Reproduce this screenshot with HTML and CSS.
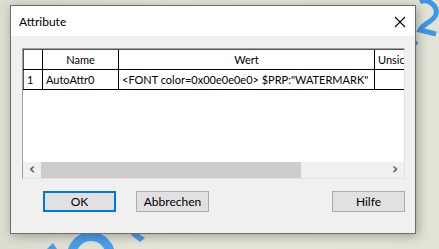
FILE: index.html
```html
<!DOCTYPE html>
<html lang="de">
<head>
<meta charset="UTF-8">
<title>Attribute</title>
<link rel="stylesheet" href="styles.css">
</head>
<body>

<svg class="backdrop" width="439" height="249" viewBox="0 0 439 249">
    <path d="M420 2 C428 -2 438 6 436 14 C434 22 424 22 420 30 L436 34" fill="none" stroke="#3f97e8" stroke-width="5"/>
    <circle cx="416" cy="43" r="2" fill="#3f97e8"/>
    <circle cx="91" cy="256" r="19.5" fill="none" stroke="#4a9ee9" stroke-width="9"/>
    <polygon points="47,249 53,243 57,249" fill="#4a9ee9"/>
    <polygon points="131,235 136,232 145,238 140,242" fill="#4a9ee9"/>
</svg>

<div class="dialog">
    <div class="titlebar">
        <span class="title">Attribute</span>
        <svg class="close" width="12" height="12" viewBox="0 0 12 12">
            <path d="M1 1 L11 11 M11 1 L1 11" stroke="#000" stroke-width="1.1"/>
        </svg>
    </div>

    <div class="content">
        <div class="grid">
            <div class="table">
                <div class="row header">
                    <div class="cell rowhead"></div>
                    <div class="cell name">Name</div>
                    <div class="cell wert">Wert</div>
                    <div class="cell hidden">Unsichtbar</div>
                </div>
                <div class="row">
                    <div class="cell rowhead">1</div>
                    <div class="cell name left">AutoAttr0</div>
                    <div class="cell wert left">&lt;FONT color=0x00e0e0e0&gt; $PRP:"WATERMARK"</div>
                    <div class="cell empty"></div>
                </div>
            </div>
            <div class="scrollbar">
                <div class="arrow">&#x2039;</div>
                <div class="thumb"></div>
                <div class="track"></div>
                <div class="arrow">&#x203A;</div>
            </div>
        </div>

        <div class="buttons">
            <button class="btn default">OK</button>
            <button class="btn">Abbrechen</button>
            <button class="btn help">Hilfe</button>
        </div>
    </div>
</div>

</body>
</html>
```

FILE: styles.css
```css
body {
    margin: 0;
    width: 439px;
    height: 249px;
    overflow: hidden;
    position: relative;
    background: linear-gradient(to right, #dddcd0, #e6e5da 40%, #e3e2d6);
    font-family: Lato, "Noto Sans", sans-serif;
    font-size: 12px;
    color: #000;
}
.backdrop {
    position: absolute;
    left: 0;
    top: 0;
}
.dialog {
    position: relative;
    margin: 5px 0 0 10px;
    width: 404px;
    height: 227px;
    border: 1px solid #6e6e6e;
    background-color: #f0f0f0;
    box-shadow: 2px 2px 10px rgba(0, 0, 0, 0.3);
    display: flex;
    flex-direction: column;
}
.titlebar {
    height: 30px;
    background-color: #fff;
    display: flex;
    align-items: center;
    justify-content: space-between;
    padding: 0 9px 0 8px;
}
.title {
    font-size: 12px;
}
.close {
    margin-top: 1px;
}
.content {
    padding: 12px 10px 0 11px;
}
.grid {
    height: 129px;
    border: 1px solid;
    border-color: #a0a0a0 #e3e3e3 #e3e3e3 #a0a0a0;
    background-color: #fff;
    display: flex;
    flex-direction: column;
    overflow: hidden;
}
.table {
    flex: 1;
    overflow: hidden;
    font-size: 11px;
}
.row {
    display: flex;
    height: 19px;
    border-bottom: 1px solid #000;
}
.header {
    border-top: 1px solid #555;
    background-color: #fff;
}
.cell {
    flex-shrink: 0;
    border-right: 1px solid #000;
    height: 19px;
    line-height: 19px;
    overflow: hidden;
    white-space: nowrap;
    padding: 0 3px;
    box-sizing: border-box;
}
.rowhead {
    width: 20px;
    border-left: 1px solid #555;
    padding: 0 3px;
}
.name {
    width: 76px;
    text-align: center;
}
.wert {
    width: 256px;
    text-align: center;
}
.left {
    text-align: left;
}
.hidden {
    width: 40px;
    border-right: none;
    white-space: normal;
    line-height: 16px;
    padding-top: 2px;
    word-break: break-all;
    text-align: left;
}
.empty {
    width: 40px;
    border-right: none;
}
.scrollbar {
    height: 16px;
    display: flex;
    background-color: #f0f0f0;
}
.arrow {
    width: 18px;
    text-align: center;
    color: #606060;
    font-family: "DejaVu Sans", sans-serif;
    font-weight: bold;
    font-size: 15px;
    line-height: 15px;
}
.thumb {
    width: 260px;
    background-color: #cdcdcd;
}
.track {
    flex: 1;
}
.buttons {
    display: flex;
    gap: 20px;
    margin-top: 12px;
    padding-left: 21px;
}
.btn {
    width: 73px;
    height: 21px;
    background-color: #e1e1e1;
    border: 1px solid #adadad;
    font-family: Lato, "Noto Sans", sans-serif;
    font-size: 12px;
    padding: 0;
    color: #000;
}
.default {
    border: 2px solid #0078d7;
}
.help {
    margin-left: 103px;
}
```
